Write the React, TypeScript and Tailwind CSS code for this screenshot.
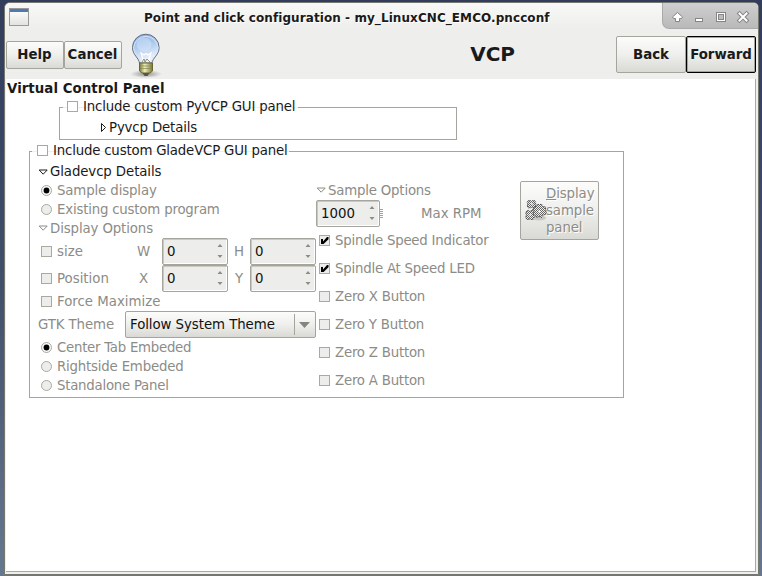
import React from "react";

type Kids = { children?: React.ReactNode };

const face = "bg-linear-to-b from-[#fcfcfb] via-[#efefed] to-[#d9dad5] border border-[#a5a59d] rounded-[2px]";

function CheckBox({ on = false, dim = true }: { on?: boolean; dim?: boolean }) {
  return (
    <span className={`block h-[11px] w-[11px] shrink-0 border border-[#a9a9a0] ${dim ? "bg-[#ededeb]" : "bg-white"}`}>
      {on && (
        <svg width="9" height="9" viewBox="0 0 9 9" className="block">
          <path d="M1 3h2v2.500L7 1h1.500v2.200L3.600 8H1z" fill="#000" />
        </svg>
      )}
    </span>
  );
}

function Radio({ on = false }: { on?: boolean }) {
  return (
    <svg width="12" height="11" viewBox="0 0 12 11" className="block shrink-0">
      <circle cx="5.5" cy="5.5" r="5" fill={on ? "#f8f8f7" : "#ededeb"} stroke="#a9a9a0" />
      {on && <circle cx="5.5" cy="5.5" r="2.9" fill="#000" />}
    </svg>
  );
}

function DownTriangle({ dim = false }: { dim?: boolean }) {
  return (
    <svg width="11" height="7" viewBox="0 0 11 7" className="mr-px block shrink-0">
      <path d="M1.2 1h8L5.2 5.2z" fill="#fff" stroke={dim ? "#8c8c86" : "#1a1a1a"} strokeWidth="1" />
    </svg>
  );
}

function CheckRow({ children, on }: Kids & { on?: boolean }) {
  return (
    <div className="flex h-7 items-center pb-px pl-[3px]">
      <CheckBox on={on} />
      <span className="ml-[5px]">{children}</span>
    </div>
  );
}

function RadioRow({ children, on }: Kids & { on?: boolean }) {
  return (
    <div className="flex h-[19px] items-center pl-[3px]">
      <Radio on={on} />
      <span className="ml-1">{children}</span>
    </div>
  );
}

function Spin({ value, wide = true }: { value: string; wide?: boolean }) {
  return (
    <div className={`flex h-[27px] shrink-0 items-center justify-between rounded-[2px] border border-[#a5a59d] bg-[#ededeb] pl-1 tracking-normal shadow-[inset_1px_1px_0_#c9c9c2,inset_-1px_-1px_0_#fff] ${wide ? "w-[66px]" : "w-[64px]"}`}>
      <span className="text-[#111]">{value}</span>
      <svg width="14" height="25" viewBox="0 0 14 25">
        <path d="M4.500 8h5L7 5zM4.500 16h5L7 19z" fill="#8c8c86" />
      </svg>
    </div>
  );
}

function Legend({ children, className }: Kids & { className: string }) {
  return (
    <div className={`-mt-[10px] flex h-[18px] items-start bg-[linear-gradient(#fff_9px,#eeeeec_9px,#eeeeec_10px,#fff_10px)] ${className}`}>
      <span className="mt-[3px]"><CheckBox dim={false} /></span>
      <span className="mt-px ml-[5px]">{children}</span>
    </div>
  );
}

function Bulb() {
  return (
    <svg width="34" height="46" viewBox="0 0 34 46" className="block">
      <defs>
        <linearGradient id="glass" x1="0" y1="0" x2="0.3" y2="1">
          <stop offset="0" stopColor="#7fa9df" />
          <stop offset=".55" stopColor="#b4cff0" />
          <stop offset="1" stopColor="#f2f6fb" />
        </linearGradient>
        <linearGradient id="brass">
          <stop offset="0" stopColor="#77763a" />
          <stop offset=".4" stopColor="#eeeebd" />
          <stop offset="1" stopColor="#77763a" />
        </linearGradient>
        <radialGradient id="floor">
          <stop offset="0" stopColor="#555" stopOpacity=".6" />
          <stop offset="1" stopColor="#555" stopOpacity="0" />
        </radialGradient>
      </defs>
      <ellipse cx="17" cy="41" rx="16" ry="4" fill="url(#floor)" />
      <path d="M10.500 30C10 25 3.500 22 3.500 14.500a13.300 13.300 0 0 1 26.600 0C30.100 22 23.500 25 23 30z" fill="url(#glass)" stroke="#626a82" />
      <path d="M11.500 29C11 24.500 4.700 21.500 4.700 14.500a12.200 12.200 0 0 1 24.300 0C29 21.500 22.500 24.500 22 29" fill="none" stroke="#d6e5f8" />
      <ellipse cx="15" cy="11.500" rx="7.500" ry="7" fill="#dce9fb" opacity=".45" />
      <path d="M14.500 28l-2.500-8 3 2 2-1.500 2 1.500 3-2-2.500 8" fill="none" stroke="#fff" strokeWidth="1.200" />
      <path d="M13 29l2-3 1 3 2-3 3 3" fill="none" stroke="#777a62" strokeWidth=".8" />
      <path d="M10.500 30h13v8l-2.500 2h-8l-2.500-2z" fill="url(#brass)" stroke="#68672f" />
      <path d="M11 33h12M11 35.500h12" stroke="#85854a" strokeWidth=".7" />
      <path d="M13.500 40h7l-2 3h-3z" fill="#555650" />
    </svg>
  );
}

function Gears() {
  return (
    <svg width="22" height="23" viewBox="0 0 22 23" className="block shrink-0">
      <defs>
        <pattern id="checker" width="2" height="2" patternUnits="userSpaceOnUse">
          <rect width="2" height="2" fill="#efefec" />
          <path d="M0 0h1v1H0zM1 1h1v1H1z" fill="#666" />
        </pattern>
      </defs>
      <ellipse cx="14" cy="19" rx="7" ry="2.500" fill="#c8c9c4" />
      <g fill="url(#checker)" stroke="#333" strokeWidth="1" strokeDasharray="1 1">
        <path d="M3.500 1.500h2l1 1 1-1h2l1.500 2-1 1.500 1 1.500-1.500 2.500h-2l-1-1-1 1h-2L2 6.500 3 5 2 3.500z" />
        <path d="M2.500 11.500h1.500l1 1 1-1h2l1.500 2-1 2 1 2-1.500 3H6l-1-1-1 1H2l-1.500-2.500 1-2-1-2.500z" />
        <path d="M10.500 7.500l2-2.500 2 1 2-1 1.500 2.500 2.500.5v2.500l1 2.500-1 2.500-2.500.5-1.500 2.500-2.500-1-2.500 1-1-2.500-2.500-1 1-2.500-1.500-2.500 2-1z" />
      </g>
      <path d="M6 5h1.500M4.500 16h1.500M13 12.500h2.500" stroke="#f4f4f2" strokeWidth="1.500" />
    </svg>
  );
}

function TitleButtons() {
  return (
    <div className="h-[26px] w-[96px] rounded-tr-[4px] rounded-bl-[7px] border-b border-l border-[#aaa] bg-linear-to-b from-[#cfcfcf] to-[#b9b9b9]">
      <svg width="95" height="25" viewBox="0 0 95 25" className="block">
        <g stroke="#858585" fill="#fff" strokeWidth="1">
          <path d="M14.500 9.500l5 4.500-1 1.500h-2v3h-4v-3h-2l-1-1.500z" />
          <rect x="32.500" y="15.500" width="7" height="3" />
          <rect x="53.500" y="9.500" width="9" height="9" />
          <rect x="55.500" y="11.500" width="5" height="5" fill="#bcbcbc" />
        </g>
        <path d="M76.500 10.500l7 7M83.500 10.500l-7 7" stroke="#858585" strokeWidth="4" strokeLinecap="square" />
        <path d="M76.500 10.500l7 7M83.500 10.500l-7 7" stroke="#fff" strokeWidth="2" strokeLinecap="square" />
      </svg>
    </div>
  );
}

export default function App() {
  return (
    <div className="h-[576px] w-[762px] overflow-hidden bg-linear-to-b from-[#313d5b] via-[#42506c] to-[#66788e] pt-[2px] pl-1 font-['DejaVu_Sans',sans-serif] text-[13.33px] leading-[16px] whitespace-nowrap text-[#1a1a1a]">
      <div className="flex h-[573px] w-[755px] flex-col rounded-t-[6px] border border-[#777772] bg-[#eeeeec]">
        <header className="flex h-[26px] shrink-0 rounded-t-[5px] bg-linear-to-b from-[#f8f8f7] to-[#eeeeec]">
          <div className="mt-[5px] ml-1 h-[18px] w-5 border border-[#999] bg-linear-to-b from-white to-[#e3e3df]">
            <div className="h-[3px] bg-[#4c7ab5]" />
          </div>
          <div className="flex-1 pt-[7px] pl-[115px] text-[12px] font-bold tracking-[0.075px] [text-shadow:1px_1px_0_#fff]">Point and click configuration - my_LinuxCNC_EMCO.pncconf</div>
          <TitleButtons />
        </header>

        <div className="flex h-[50px] shrink-0 font-bold">
          <div className={`mt-3 ml-px flex h-7 w-[58px] items-center justify-center pr-px ${face}`}>Help</div>
          <div className={`mt-3 flex h-7 w-[58px] items-center justify-center pr-px ${face}`}>Cancel</div>
          <div className="mt-1 ml-[7px] w-[34px]"><Bulb /></div>
          <div className="flex h-[50px] flex-1 items-center justify-end pr-[101px] text-[20px] leading-[24px]">VCP</div>
          <div className={`mt-[7px] flex h-[37px] w-[70px] items-center justify-center ${face}`}>Back</div>
          <div className="mt-[7px] mr-[2px] flex h-[37px] w-[70px] items-center justify-center rounded-[2px] border border-black bg-linear-to-b from-[#fcfcfb] via-[#efefed] to-[#d9dad5] shadow-[inset_0_0_0_1px_#a5a59d]">Forward</div>
        </div>

        <main className="mr-[2px] mb-[2px] ml-px flex-1 border-r border-b border-[#aaaaa5] bg-white">
          <h1 className="h-7 pt-[2px] pl-px font-bold tracking-[0.05px]">Virtual Control Panel</h1>

          <section className="ml-[53px] h-[33px] w-[398px] border border-[#a5a59d]">
            <Legend className="ml-[3px] w-[235px] pl-1 tracking-[-0.19px]">Include custom PyVCP GUI panel</Legend>
            <div className="mt-1 ml-10 flex h-4 items-center tracking-[-0.15px]">
              <svg width="7" height="11" viewBox="0 0 7 11" className="mr-[2px] -mt-px">
                <path d="M1.500 1.500v8l4-4z" fill="#fff" stroke="#1a1a1a" />
              </svg>
              Pyvcp Details
            </div>
          </section>

          <section className="mt-[11px] ml-[23px] h-[247px] w-[595px] border border-[#a5a59d]">
            <Legend className="ml-[2px] w-[257px] pl-[5px] tracking-[-0.19px]">Include custom GladeVCP GUI panel</Legend>
            <div className="mt-px ml-2 flex h-5 items-center pt-[2px] tracking-[-0.1px]">
              <DownTriangle />Gladevcp Details
            </div>
            <div className="ml-2 flex text-[#8c8c86]">
              <div className="w-[278px]">
                <RadioRow on><span className="tracking-[-0.13px]">Sample display</span></RadioRow>
                <RadioRow><span className="tracking-[-0.2px]">Existing custom program</span></RadioRow>
                <div className="flex h-[19px] items-center tracking-[-0.12px]"><DownTriangle dim />Display Options</div>
                <div className="grid h-[27px] grid-cols-[96px_28px_66px_22px_66px] items-center">
                  <div className="flex items-center pl-[3px]"><CheckBox /><span className="ml-[5px]">size</span></div>
                  <span className="pl-[3px]">W</span>
                  <Spin value="0" />
                  <span className="pl-[6px]">H</span>
                  <Spin value="0" />
                </div>
                <div className="grid h-[27px] grid-cols-[96px_28px_66px_22px_66px] items-center">
                  <div className="flex items-center pl-[3px]"><CheckBox /><span className="ml-[5px]">Position</span></div>
                  <span className="pl-[5px]">X</span>
                  <Spin value="0" />
                  <span className="pl-[7px]">Y</span>
                  <Spin value="0" />
                </div>
                <div className="flex h-[19px] items-center pl-[3px]"><CheckBox /><span className="ml-[5px]">Force Maximize</span></div>
                <div className="flex h-[27px] items-center">
                  <span className="w-[87px] tracking-[-0.1px]">GTK Theme</span>
                  <div className={`flex h-[27px] w-[191px] items-center pl-1 tracking-[-0.06px] text-[#111] ${face}`}>
                    <span className="flex-1">Follow System Theme</span>
                    <span className="h-[21px] w-px bg-[#a5a59d]" />
                    <svg width="20" height="25" viewBox="0 0 20 25"><path d="M4 10h11l-5.500 6z" fill="#858580" /></svg>
                  </div>
                </div>
                <RadioRow on><span className="tracking-[-0.27px]">Center Tab Embeded</span></RadioRow>
                <RadioRow><span className="tracking-[-0.2px]">Rightside Embeded</span></RadioRow>
                <RadioRow><span className="tracking-[-0.25px]">Standalone Panel</span></RadioRow>
              </div>

              <div className="w-[204px]">
                <div className="flex h-[19px] items-center tracking-[-0.2px]"><DownTriangle dim />Sample Options</div>
                <div className="flex h-[27px] items-center">
                  <Spin value="1000" wide={false} />
                  <svg width="4" height="9" viewBox="0 0 4 9"><path d="M0 .5h3M0 2.500h3M0 4.500h3M0 6.500h3M0 8.500h3" stroke="#a5a59d" /></svg>
                  <span className="ml-[37px]">Max RPM</span>
                </div>
                <div className="tracking-[-0.22px]">
                  <CheckRow on>Spindle Speed Indicator</CheckRow>
                  <CheckRow on>Spindle At Speed LED</CheckRow>
                  <CheckRow>Zero X Button</CheckRow>
                  <CheckRow>Zero Y Button</CheckRow>
                  <CheckRow>Zero Z Button</CheckRow>
                  <CheckRow>Zero A Button</CheckRow>
                </div>
              </div>

              <div className={`flex h-[59px] w-[79px] items-center pl-1 ${face}`}>
                <Gears />
                <div className="-ml-px leading-[17px] tracking-[-0.1px] [text-shadow:1px_1px_0_#fff]"><span className="underline">D</span>isplay<br />sample<br />panel</div>
              </div>
            </div>
          </section>
        </main>
      </div>
    </div>
  );
}
